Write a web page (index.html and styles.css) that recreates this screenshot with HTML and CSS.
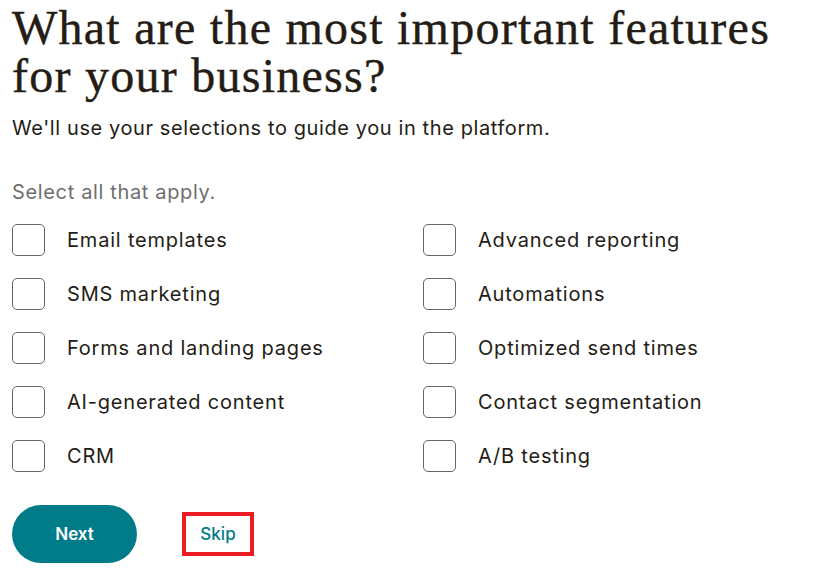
FILE: index.html
```html
<!DOCTYPE html>
<html lang="en">
<head>
  <meta charset="UTF-8">
  <meta name="viewport" content="width=device-width, initial-scale=1.0">
  <title>Features</title>

  <link rel="stylesheet" href="styles.css">
</head>
<body>

<div class="onboarding">
  <h1>What are the most important features for your business?</h1>
  <p class="subtitle">We'll use your selections to guide you in the platform.</p>

  <p class="hint">Select all that apply.</p>

  <div class="feature-list">
    <label class="feature"><input type="checkbox"><span>Email templates</span></label>
    <label class="feature"><input type="checkbox"><span>Advanced reporting</span></label>
    <label class="feature"><input type="checkbox"><span>SMS marketing</span></label>
    <label class="feature"><input type="checkbox"><span>Automations</span></label>
    <label class="feature"><input type="checkbox"><span>Forms and landing pages</span></label>
    <label class="feature"><input type="checkbox"><span>Optimized send times</span></label>
    <label class="feature"><input type="checkbox"><span>AI-generated content</span></label>
    <label class="feature"><input type="checkbox"><span>Contact segmentation</span></label>
    <label class="feature"><input type="checkbox"><span>CRM</span></label>
    <label class="feature"><input type="checkbox"><span>A/B testing</span></label>
  </div>

  <div class="actions">
    <button class="next-button">Next</button>
    <button class="skip-button">Skip</button>
  </div>
</div>

</body>
</html>
```

FILE: styles.css
```css
body {
  margin: 0;
  background-color: #fff;
  font-family: Inter, "Liberation Sans", Arial, sans-serif;
  color: #241c15;
}

.onboarding {
  padding: 0 12px;
}

h1 {
  margin: 0;
  padding-top: 4px;
  font-family: "Liberation Serif", "Times New Roman", serif;
  font-weight: normal;
  font-size: 48px;
  line-height: 48px;
  letter-spacing: 1.25px;
  color: #241c15;
  -webkit-text-stroke: 0.4px #241c15;
  width: 790px;
}

.subtitle {
  margin: 14px 0 0;
  font-size: 20px;
  line-height: 28px;
  letter-spacing: 0.6px;
  color: #241c15;
}

.hint {
  margin: 36px 0 0;
  font-size: 20px;
  line-height: 28px;
  letter-spacing: 0.65px;
  color: #6e6e6e;
}

.feature-list {
  display: grid;
  grid-template-columns: 411px 1fr;
  row-gap: 22px;
  margin-top: 18px;
}

.feature {
  display: flex;
  align-items: center;
  gap: 22px;
  font-size: 20px;
  line-height: 28px;
  letter-spacing: 0.8px;
  cursor: pointer;
}

.feature input {
  appearance: none;
  margin: 0;
  width: 33px;
  height: 32px;
  border: 1px solid #666;
  border-radius: 5px;
  background-color: #fff;
}

.actions {
  display: flex;
  align-items: center;
  gap: 45px;
  margin-top: 33px;
}

.next-button {
  width: 125px;
  height: 58px;
  border: none;
  border-radius: 29px;
  background-color: #007c89;
  color: #fff;
  font-family: Inter, "Liberation Sans", Arial, sans-serif;
  font-size: 17px;
  font-weight: 600;
  cursor: pointer;
}

.skip-button {
  width: 72px;
  height: 44px;
  border: 4px solid #ed1c24;
  background-color: transparent;
  color: #007c89;
  font-family: Inter, "Liberation Sans", Arial, sans-serif;
  font-size: 17px;
  font-weight: 500;
  cursor: pointer;
}
```
